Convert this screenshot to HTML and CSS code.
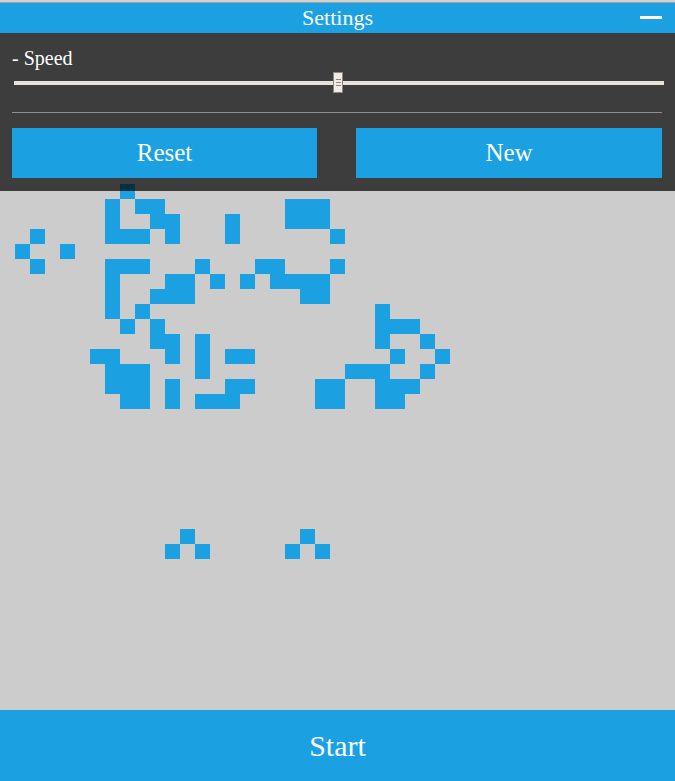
FILE: index.html
```html
<!DOCTYPE html>
<html lang="en">
<head>
<meta charset="utf-8">
<title>Settings</title>
<link rel="stylesheet" href="styles.css">
</head>
<body>
<div class="app">
  <header class="titlebar">
    <span class="title">Settings</span>
    <span class="minimize" aria-label="Minimize"></span>
  </header>
  <main class="stage">
    <div class="board">
      <div class="cell" style="grid-area: 11 / 9"></div>
      <div class="cell" style="grid-area: 12 / 8"></div>
      <div class="cell" style="grid-area: 12 / 10"></div>
      <div class="cell" style="grid-area: 12 / 11"></div>
      <div class="cell" style="grid-area: 12 / 20"></div>
      <div class="cell" style="grid-area: 12 / 21"></div>
      <div class="cell" style="grid-area: 12 / 22"></div>
      <div class="cell" style="grid-area: 13 / 8"></div>
      <div class="cell" style="grid-area: 13 / 11"></div>
      <div class="cell" style="grid-area: 13 / 12"></div>
      <div class="cell" style="grid-area: 13 / 16"></div>
      <div class="cell" style="grid-area: 13 / 20"></div>
      <div class="cell" style="grid-area: 13 / 21"></div>
      <div class="cell" style="grid-area: 13 / 22"></div>
      <div class="cell" style="grid-area: 14 / 3"></div>
      <div class="cell" style="grid-area: 14 / 8"></div>
      <div class="cell" style="grid-area: 14 / 9"></div>
      <div class="cell" style="grid-area: 14 / 10"></div>
      <div class="cell" style="grid-area: 14 / 12"></div>
      <div class="cell" style="grid-area: 14 / 16"></div>
      <div class="cell" style="grid-area: 14 / 23"></div>
      <div class="cell" style="grid-area: 15 / 2"></div>
      <div class="cell" style="grid-area: 15 / 5"></div>
      <div class="cell" style="grid-area: 16 / 3"></div>
      <div class="cell" style="grid-area: 16 / 8"></div>
      <div class="cell" style="grid-area: 16 / 9"></div>
      <div class="cell" style="grid-area: 16 / 10"></div>
      <div class="cell" style="grid-area: 16 / 14"></div>
      <div class="cell" style="grid-area: 16 / 18"></div>
      <div class="cell" style="grid-area: 16 / 19"></div>
      <div class="cell" style="grid-area: 16 / 23"></div>
      <div class="cell" style="grid-area: 17 / 8"></div>
      <div class="cell" style="grid-area: 17 / 12"></div>
      <div class="cell" style="grid-area: 17 / 13"></div>
      <div class="cell" style="grid-area: 17 / 15"></div>
      <div class="cell" style="grid-area: 17 / 17"></div>
      <div class="cell" style="grid-area: 17 / 19"></div>
      <div class="cell" style="grid-area: 17 / 20"></div>
      <div class="cell" style="grid-area: 17 / 21"></div>
      <div class="cell" style="grid-area: 17 / 22"></div>
      <div class="cell" style="grid-area: 18 / 8"></div>
      <div class="cell" style="grid-area: 18 / 11"></div>
      <div class="cell" style="grid-area: 18 / 12"></div>
      <div class="cell" style="grid-area: 18 / 13"></div>
      <div class="cell" style="grid-area: 18 / 21"></div>
      <div class="cell" style="grid-area: 18 / 22"></div>
      <div class="cell" style="grid-area: 19 / 8"></div>
      <div class="cell" style="grid-area: 19 / 10"></div>
      <div class="cell" style="grid-area: 19 / 26"></div>
      <div class="cell" style="grid-area: 20 / 9"></div>
      <div class="cell" style="grid-area: 20 / 11"></div>
      <div class="cell" style="grid-area: 20 / 26"></div>
      <div class="cell" style="grid-area: 20 / 27"></div>
      <div class="cell" style="grid-area: 20 / 28"></div>
      <div class="cell" style="grid-area: 21 / 11"></div>
      <div class="cell" style="grid-area: 21 / 12"></div>
      <div class="cell" style="grid-area: 21 / 14"></div>
      <div class="cell" style="grid-area: 21 / 26"></div>
      <div class="cell" style="grid-area: 21 / 29"></div>
      <div class="cell" style="grid-area: 22 / 7"></div>
      <div class="cell" style="grid-area: 22 / 8"></div>
      <div class="cell" style="grid-area: 22 / 12"></div>
      <div class="cell" style="grid-area: 22 / 14"></div>
      <div class="cell" style="grid-area: 22 / 16"></div>
      <div class="cell" style="grid-area: 22 / 17"></div>
      <div class="cell" style="grid-area: 22 / 27"></div>
      <div class="cell" style="grid-area: 22 / 30"></div>
      <div class="cell" style="grid-area: 23 / 8"></div>
      <div class="cell" style="grid-area: 23 / 9"></div>
      <div class="cell" style="grid-area: 23 / 10"></div>
      <div class="cell" style="grid-area: 23 / 14"></div>
      <div class="cell" style="grid-area: 23 / 24"></div>
      <div class="cell" style="grid-area: 23 / 25"></div>
      <div class="cell" style="grid-area: 23 / 26"></div>
      <div class="cell" style="grid-area: 23 / 29"></div>
      <div class="cell" style="grid-area: 24 / 8"></div>
      <div class="cell" style="grid-area: 24 / 9"></div>
      <div class="cell" style="grid-area: 24 / 10"></div>
      <div class="cell" style="grid-area: 24 / 12"></div>
      <div class="cell" style="grid-area: 24 / 16"></div>
      <div class="cell" style="grid-area: 24 / 17"></div>
      <div class="cell" style="grid-area: 24 / 22"></div>
      <div class="cell" style="grid-area: 24 / 23"></div>
      <div class="cell" style="grid-area: 24 / 26"></div>
      <div class="cell" style="grid-area: 24 / 27"></div>
      <div class="cell" style="grid-area: 24 / 28"></div>
      <div class="cell" style="grid-area: 25 / 9"></div>
      <div class="cell" style="grid-area: 25 / 10"></div>
      <div class="cell" style="grid-area: 25 / 12"></div>
      <div class="cell" style="grid-area: 25 / 14"></div>
      <div class="cell" style="grid-area: 25 / 15"></div>
      <div class="cell" style="grid-area: 25 / 16"></div>
      <div class="cell" style="grid-area: 25 / 22"></div>
      <div class="cell" style="grid-area: 25 / 23"></div>
      <div class="cell" style="grid-area: 25 / 26"></div>
      <div class="cell" style="grid-area: 25 / 27"></div>
      <div class="cell" style="grid-area: 34 / 13"></div>
      <div class="cell" style="grid-area: 34 / 21"></div>
      <div class="cell" style="grid-area: 35 / 12"></div>
      <div class="cell" style="grid-area: 35 / 14"></div>
      <div class="cell" style="grid-area: 35 / 20"></div>
      <div class="cell" style="grid-area: 35 / 22"></div>
    </div>
    <section class="settings">
      <label class="speed-label" for="speed">- Speed</label>
      <input class="speed-range" id="speed" type="range" min="0" max="100" step="any" value="49.8">
      <hr class="divider">
      <div class="actions">
        <button class="btn" type="button">Reset</button>
        <button class="btn" type="button">New</button>
      </div>
    </section>
  </main>
  <button class="start" type="button">Start</button>
</div>
</body>
</html>
```

FILE: styles.css
```css
* {
  box-sizing: border-box;
}

html, body {
  margin: 0;
  padding: 0;
  height: 100%;
}

body {
  background: #cccccc;
  font-family: "Liberation Serif", "Times New Roman", serif;
  color: #ffffff;
  overflow: hidden;
}

.app {
  display: flex;
  flex-direction: column;
  height: 100vh;
  border-top: 2px solid #d2d2d2;
}

.titlebar {
  position: relative;
  flex: 0 0 auto;
  height: 31px;
  border-top: 1px solid #a3a3a3;
  background: #1ba1e2;
  display: flex;
  align-items: center;
  justify-content: center;
}

.title {
  font-size: 22px;
  line-height: 30px;
}

.minimize {
  position: absolute;
  right: 13px;
  top: 13px;
  width: 22px;
  height: 3px;
  background: #ffffff;
}

.stage {
  position: relative;
  flex: 1 1 auto;
  min-height: 0;
  overflow: hidden;
  background: #cccccc;
}

.board {
  display: grid;
  grid-template-columns: repeat(45, 15px);
  grid-template-rows: repeat(45, 15px);
  padding-top: 1px;
}

.cell {
  background: #1ba1e2;
}

.settings {
  position: absolute;
  top: 0;
  left: 0;
  right: 0;
  height: 158px;
  background: rgba(0, 0, 0, 0.7);
  padding: 14px 13px 13px 12px;
  display: flex;
  flex-direction: column;
}

.speed-label {
  display: block;
  font-size: 20px;
  line-height: 23px;
  height: 23px;
}

.speed-range {
  -webkit-appearance: none;
  appearance: none;
  display: block;
  width: 650px;
  height: 21px;
  margin: 2px 0 0 2px;
  padding: 0;
  background: transparent;
  outline: none;
}

.speed-range::-webkit-slider-runnable-track {
  height: 4px;
  background: #e6e1da;
  border: none;
}

.speed-range::-webkit-slider-thumb {
  -webkit-appearance: none;
  appearance: none;
  box-sizing: border-box;
  width: 10px;
  height: 21px;
  margin-top: -8.5px;
  border: 1px solid #8c8782;
  background:
    linear-gradient(#8c8782, #8c8782) 2px 6px / 5px 1px no-repeat,
    linear-gradient(#8c8782, #8c8782) 2px 9px / 5px 1px no-repeat,
    linear-gradient(#8c8782, #8c8782) 2px 12px / 5px 1px no-repeat,
    #efece8;
}

.divider {
  border: none;
  height: 1px;
  background: #8e8e8e;
  margin: 19px 0 0 0;
  width: 650px;
}

.actions {
  display: grid;
  grid-template-columns: 305px 306px;
  justify-content: space-between;
  margin-top: 15px;
  width: 650px;
}

.btn {
  height: 50px;
  border: none;
  padding: 0;
  background: #1ba1e2;
  color: #ffffff;
  font-family: "Liberation Serif", "Times New Roman", serif;
  font-size: 25px;
  line-height: 50px;
}

.start {
  flex: 0 0 71px;
  height: 71px;
  width: 100%;
  border: none;
  padding: 0;
  background: #1ba1e2;
  color: #ffffff;
  font-family: "Liberation Serif", "Times New Roman", serif;
  font-size: 30px;
}
```
